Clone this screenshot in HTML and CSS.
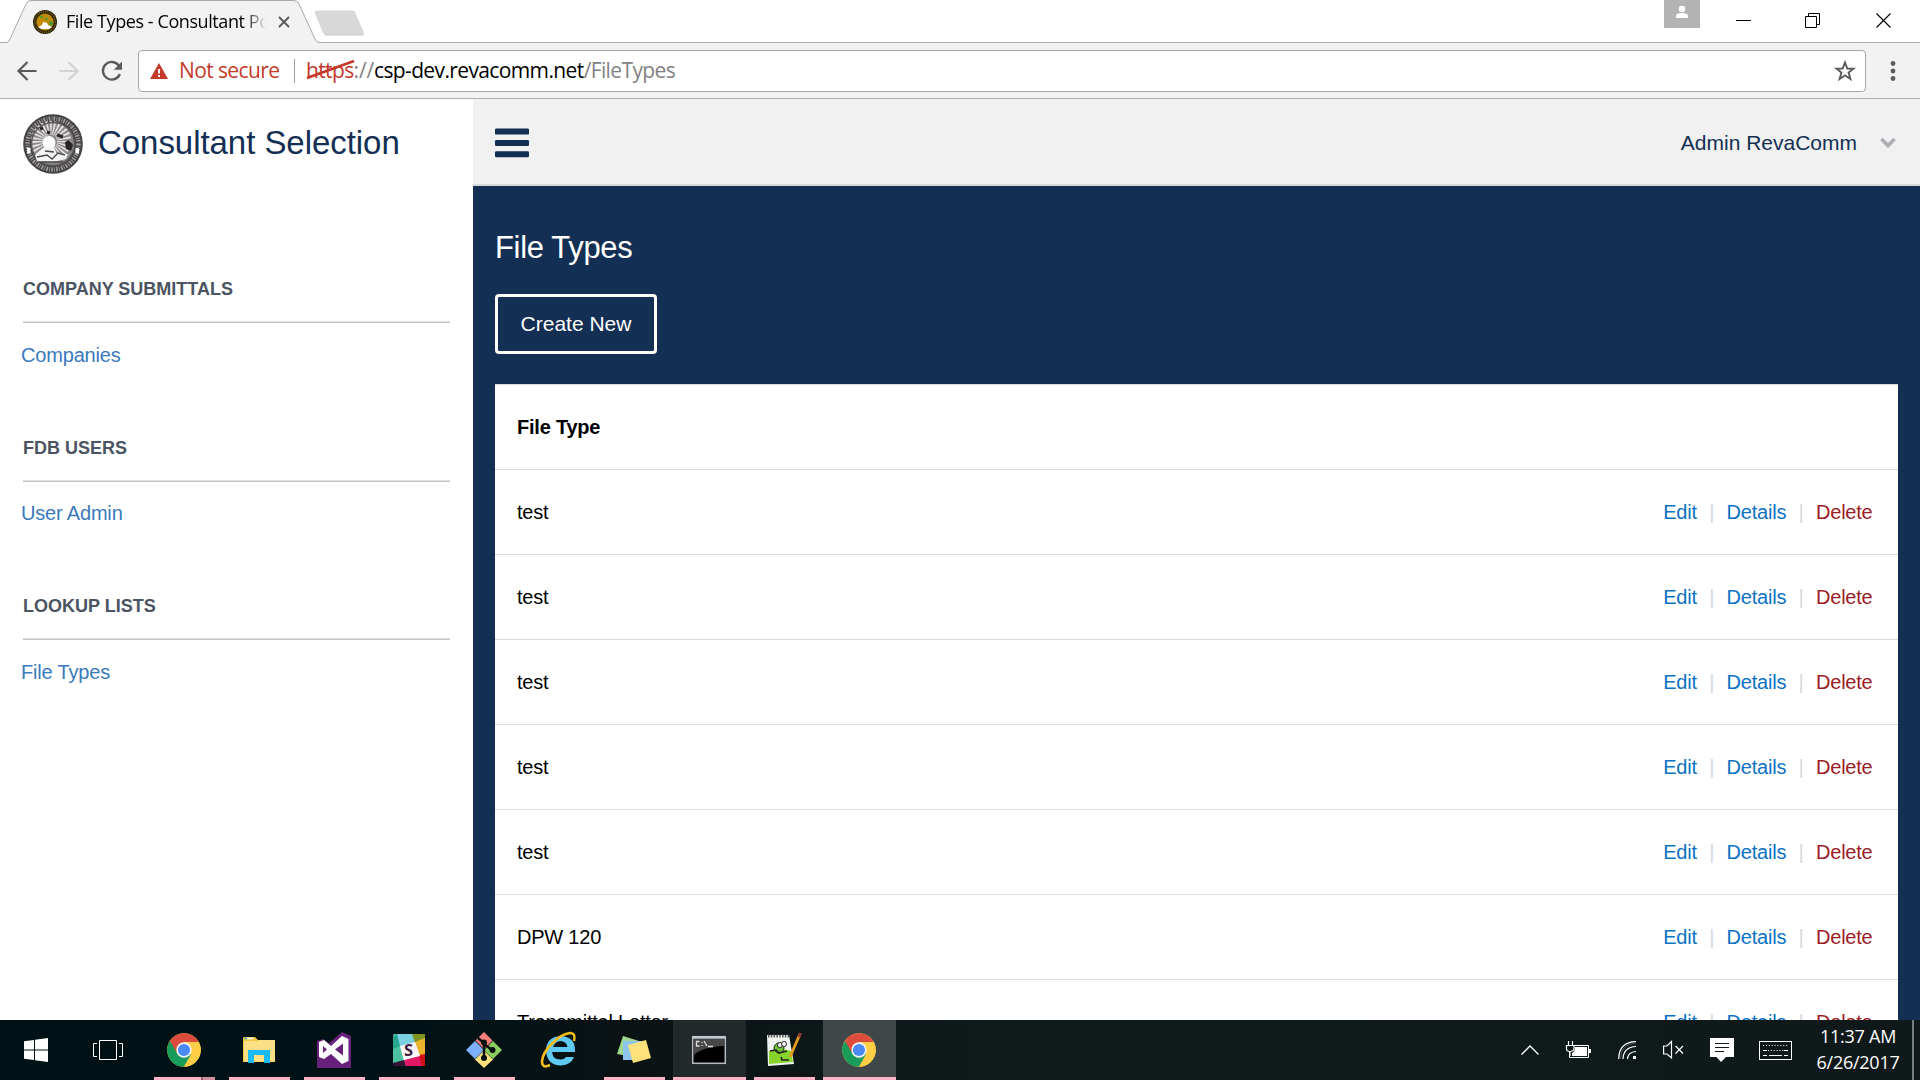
FILE: index.html
```html
<!DOCTYPE html>
<html lang="en">
<head>
<meta charset="utf-8">
<title>File Types - Consultant Portal</title>
<link rel="stylesheet" href="styles.css">
</head>
<body>
<svg class="defs" width="0" height="0" aria-hidden="true">
  <symbol id="chrome" viewBox="0 0 34 34">
    <circle cx="17" cy="17" r="16.8" fill="#ffce44"/>
    <path d="M17 17 L2.6 8.4 A16.8 16.8 0 0 0 17 33.8 L24.2 21.2Z" fill="#179c5a"/>
    <path d="M17 9 H31.8 A16.8 16.8 0 0 0 2.9 7.9 L10 20 L17 17Z" fill="#dc4b3e"/>
    <path d="M17 33.8 L24.2 21.2 L26 12 L31.8 9 A16.8 16.8 0 0 1 17 33.8Z" fill="#ffce44"/>
    <circle cx="17" cy="17" r="7.7" fill="#f4f4f4"/>
    <circle cx="17" cy="17" r="6.1" fill="#4a8af4"/>
  </symbol>
</svg>

<div class="tabstrip">
  <div class="tab">
    <svg class="tab-shape" width="320" height="43" viewBox="0 0 320 43"><path d="M0 42.5H6Q8.500 42.500 9.500 40L26 4Q28 .5 31 .5H294Q297 .5 299 4L315 39Q316.500 42.500 319 42.500H320V43H0Z" fill="#f2f2f2"/><path d="M0 42.500H6Q8.500 42.500 9.500 40L26 4Q28 .5 31 .5H294Q297 .5 299 4L315 39Q316.500 42.500 319 42.500H320" fill="none" stroke="#a9a9a9"/></svg>
    <svg class="favicon" width="24" height="24" viewBox="0 0 24 24"><circle cx="12" cy="12" r="12" fill="#2b2308"/><circle cx="12" cy="12" r="10.300" fill="none" stroke="#7b6410" stroke-width="1.500" stroke-dasharray="1 1"/><circle cx="12" cy="12" r="8.600" fill="#c08c06"/><path d="M7 6.500l3 1M12 8.500l3 1" stroke="#3f9a3a" stroke-width="1.500"/><path d="M16 12l2.500-1 1.500 2-1.500 3-2-1z" fill="#3f9a3a"/><path d="M5 17l4-2 1-3 4 1 1 2 4 2-3 2H9z" fill="#fff"/></svg>
    <span class="tab-title">File Types - Consultant Portal</span>
    <svg class="tab-close" width="12" height="12" viewBox="0 0 12 12"><path d="M1 1l10 10M11 1L1 11" stroke="#5a5a5a" stroke-width="1.900"/></svg>
  </div>
  <svg class="newtab" width="52" height="26" viewBox="0 0 52 26"><path d="M3 .5H38Q40 .5 41 2L50 23Q50.500 25 48.500 25H12Q10 25 9 23L.8 3Q.5 .5 3 .5Z" fill="#d8d8d8"/><path d="M11 25H49" stroke="#c6c6c6"/></svg>
  <div class="win-controls">
    <svg width="36" height="28" viewBox="0 0 36 28"><path d="M0 0H36V28H0z" fill="#b3b3b3"/><circle cx="18" cy="9" r="3.200" fill="#fff"/><path d="M12 18V15.500Q12 13 18 13T24 15.500V18Z" fill="#fff"/></svg>
    <svg class="min" width="16" height="28" viewBox="0 0 16 28"><path d="M0 20.500H15" stroke="#000"/></svg>
    <svg class="max" width="16" height="29" viewBox="0 0 16 29"><path d="M.5 16.500H11.500V27.500H.5zM3.500 16V13.500H14.500V24.500H12" fill="none" stroke="#000"/></svg>
    <svg class="close" width="16" height="29" viewBox="0 0 16 29"><path d="M.5 13.500l14 14M14.500 13.500l-14 14" stroke="#000" stroke-width="1.100"/></svg>
  </div>
</div>

<div class="toolbar">
  <svg class="back" width="20" height="20" viewBox="0 0 20 20"><path d="M19.500 10H2M10.500 1L1.500 10L10.500 19" fill="none" stroke="#5a5a5a" stroke-width="2.200"/></svg>
  <svg class="fwd" width="20" height="20" viewBox="0 0 20 20"><path d="M.5 10H18M9.500 1L18.500 10L9.500 19" fill="none" stroke="#d3d3d3" stroke-width="2.200"/></svg>
  <svg class="reload" width="22" height="20" viewBox="0 0 22 20"><path d="M18 4.800A8.800 8.800 0 1 0 18.900 13" fill="none" stroke="#5a5a5a" stroke-width="2.300"/><path d="M21 .6V8.700H12.800Z" fill="#5a5a5a"/></svg>
  <div class="omnibox">
    <svg class="warn" width="18" height="16" viewBox="0 0 18 16"><path d="M9 0L18 16H0Z" fill="#c5392a"/><path d="M9 6V10.500M9 12V14" stroke="#fff" stroke-width="1.900"/></svg>
    <span class="insecure">Not secure</span>
    <span class="divider"></span>
    <span class="url"><span class="scheme">https<svg class="strike" width="50" height="22" viewBox="0 0 50 22"><path d="M1 19L48 2" stroke="#c5392a" stroke-width="2.800"/></svg></span><span class="sep">://</span><span class="host">csp-dev.revacomm.net</span><span class="path">/FileTypes</span></span>
    <svg class="star" width="22" height="22" viewBox="0 0 22 22"><path d="M11 2.500L13.300 8.500L19.500 8.700L14.600 12.600L16.400 19L11 15.300L5.600 19L7.400 12.600L2.500 8.700L8.700 8.500Z" fill="none" stroke="#5a5a5a" stroke-width="1.900"/></svg>
  </div>
  <svg class="menu" width="6" height="22" viewBox="0 0 6 22"><g fill="#5a5a5a"><circle cx="3" cy="3.500" r="2.400"/><circle cx="3" cy="11" r="2.400"/><circle cx="3" cy="18.500" r="2.400"/></g></svg>
</div>

<div class="app">
  <aside class="sidebar">
    <div class="brand">
      <svg class="seal" width="60" height="60" viewBox="0 0 60 60">
        <circle cx="30" cy="30" r="29.800" fill="#454243"/>
        <circle cx="30" cy="30" r="25.500" fill="none" stroke="#a19e9e" stroke-width="4.500" stroke-dasharray="1.600 1.400 .8 1.200"/>
        <circle cx="30" cy="30" r="21.500" fill="#8a8788"/>
        <circle cx="28" cy="27" r="13" fill="none" stroke="#e2e0e1" stroke-width="14" stroke-dasharray="1.500 1.500"/>
        <circle cx="30" cy="30" r="21.500" fill="none" stroke="#5c595a" stroke-width="1.500"/>
        <circle cx="26" cy="28.500" r="6.500" fill="#fff"/>
        <path d="M17 15l3-1M24 18l3 1M34 21l6 2" stroke="#262425" stroke-width="3"/>
        <path d="M42 28l4-2 4 5-2 6-5-2z" fill="#262425"/>
        <path d="M12 41l9-7 10-2 2 7 12 1-2 5-13 3-16-1z" fill="#f5f5f5"/>
        <path d="M14 43l10-2 5 4 6-6 7 2M22 37l9 1M18 48h22" fill="none" stroke="#4b4849" stroke-width="1.400"/>
        <path d="M4 34h3.500v5.500H4zM52.500 34H56v5.500h-3.500z" fill="#fff"/>
      </svg>
      <span class="brand-name">Consultant Selection</span>
    </div>
    <nav class="nav">
      <section class="nav-section"><h2 class="nav-heading">COMPANY SUBMITTALS</h2><a class="nav-link">Companies</a></section>
      <section class="nav-section"><h2 class="nav-heading">FDB USERS</h2><a class="nav-link">User Admin</a></section>
      <section class="nav-section"><h2 class="nav-heading">LOOKUP LISTS</h2><a class="nav-link">File Types</a></section>
    </nav>
  </aside>
  <div class="main">
    <header class="topbar">
      <svg class="burger" width="34" height="30" viewBox="0 0 34 30"><g fill="#132f53"><rect y=".6" width="34" height="6" rx="1.200"/><rect y="12" width="34" height="6" rx="1.200"/><rect y="23.300" width="34" height="6" rx="1.200"/></g></svg>
      <span class="user">Admin RevaComm</span>
      <svg class="caret" width="16" height="12" viewBox="0 0 16 12"><path d="M1.500 2L8 8.500L14.500 2" fill="none" stroke="#adb1b6" stroke-width="3.800"/></svg>
    </header>
    <main class="content">
      <h1 class="title">File Types</h1>
      <a class="create">Create New</a>
      <div class="table">
        <div class="row head"><span>File Type</span></div>
        <div class="row"><span>test</span><span class="actions"><a>Edit</a><i>|</i><a>Details</a><i>|</i><a class="delete">Delete</a></span></div>
        <div class="row"><span>test</span><span class="actions"><a>Edit</a><i>|</i><a>Details</a><i>|</i><a class="delete">Delete</a></span></div>
        <div class="row"><span>test</span><span class="actions"><a>Edit</a><i>|</i><a>Details</a><i>|</i><a class="delete">Delete</a></span></div>
        <div class="row"><span>test</span><span class="actions"><a>Edit</a><i>|</i><a>Details</a><i>|</i><a class="delete">Delete</a></span></div>
        <div class="row"><span>test</span><span class="actions"><a>Edit</a><i>|</i><a>Details</a><i>|</i><a class="delete">Delete</a></span></div>
        <div class="row"><span>DPW 120</span><span class="actions"><a>Edit</a><i>|</i><a>Details</a><i>|</i><a class="delete">Delete</a></span></div>
        <div class="row"><span>Transmittal Letter</span><span class="actions"><a>Edit</a><i>|</i><a>Details</a><i>|</i><a class="delete">Delete</a></span></div>
      </div>
    </main>
  </div>
</div>

<footer class="taskbar">
  <div class="sys"><svg width="24" height="24" viewBox="0 0 24 24"><path d="M0 3.300L10 1.900V11.400H0zM11 1.700L24 0V11.400H11zM0 12.500H10V22L0 20.700zM11 12.500H24V24L11 22.200z" fill="#fff"/></svg></div>
  <div class="sys"><svg width="30" height="20" viewBox="0 0 30 20"><path d="M6.500 .5H23.500V19.500H6.500zM4 3.500H.5V16.500H4M26 3.500H29.500V16.500H26" fill="none" stroke="#fff"/></svg></div>
  <div class="tasks">
    <div class="task open stacked"><svg width="34" height="34"><use href="#chrome"/></svg></div>
    <div class="task open"><svg width="32" height="28" viewBox="0 0 32 28"><path d="M0 2Q0 1 1 1H12L15 4H31Q32 4 32 5V26H0z" fill="#f5c842"/><path d="M1 5H14L16 4H32V25.500H1z" fill="#fbdf87"/><path d="M3 2.500H10" stroke="#fff" stroke-width="1.500"/><path d="M1.500 2.500H4" stroke="#2ba2a2" stroke-width="1.500"/><path d="M5 14H27V27H21V19H11V27H5z" fill="#19b9f2"/></svg></div>
    <div class="task open"><svg width="34" height="36" viewBox="0 0 34 36"><path d="M0 9L6 7L12 11L25 0L34 4V36H0z" fill="#68217a"/><path d="M2 10L7 8L14 14L25 4L31.500 7V29L25 32L14 22L7 27L2 25zM6 14V21L10 17.500zM18 17.500L26 23.500V11.500z" fill="#fff" fill-rule="evenodd"/></svg></div>
    <div class="task open"><svg width="32" height="32" viewBox="0 0 32 32"><rect width="32" height="32" rx="2" fill="#f8f5f5"/><path d="M2 0H4L12 31H11L0 31V2z" fill="#4bc3a0"/><path d="M3 0H20L23 9L7 13z" fill="#7bd1e2"/><path d="M0 2L4 0L7 12L0 15z" fill="#26a68f"/><path d="M19 0H32V5L22 9z" fill="#7d9623"/><path d="M22 8L32 4V22L27 23z" fill="#ecb42e"/><path d="M11 26L27 21L30 32H13z" fill="#e01765"/><path d="M26 21L32 20V32H29z" fill="#d10f16"/><path d="M0 29L11 26L13 32H0z" fill="#361238"/><path d="M7 12L22 8L27 22L11 26z" fill="#fbf6f8"/><text x="11" y="22" class="slack-s">S</text></svg></div>
    <div class="task open"><svg width="36" height="36" viewBox="0 0 36 36"><path d="M18 0L26.500 8.500L18 17L9.500 8.500z" fill="#ff7d7d"/><path d="M27 9L36 18L27 27L18 18z" fill="#89cf60"/><path d="M9 9L18 18L9 27L0 18z" fill="#7eafff"/><path d="M18 18.500L27 27.500L18 36L9 27.500z" fill="#ffe27d"/><path d="M12 6L18 11V26M18 12L26 18" stroke="#07110f" stroke-width="2.500" fill="none"/><circle cx="18" cy="10.500" r="3" fill="#07110f"/><circle cx="26.500" cy="18" r="3" fill="#07110f"/><circle cx="18" cy="26" r="3" fill="#07110f"/></svg></div>
    <div class="task"><svg width="36" height="36" viewBox="0 0 36 36"><path d="M11 20H34Q35 5 20 4Q5 5 5 19Q6 33 20 33.500Q30 33 33 25H25Q23 28 19 27.500Q12 27 11.500 22zM12 15Q14 9 20 9Q26 10 26.500 15z" fill="#5fcbf5" fill-rule="evenodd"/><path d="M9 33Q1 37 1 29C2 18 18 2 29 1Q35 1 33 9" fill="none" stroke="#f3bd1c" stroke-width="2.600"/></svg></div>
    <div class="task open"><svg width="34" height="28" viewBox="0 0 34 28"><path d="M6 0L22 5L17 21L0 18z" fill="#9fd78e"/><path d="M6 5H24V24H6z" fill="#8fc4ef"/><path d="M11 9L29 4L34 22L16 27z" fill="#fde17a"/></svg></div>
    <div class="task open active"><svg width="34" height="28" viewBox="0 0 34 28"><rect x=".7" y=".7" width="32.600" height="26.600" fill="#000" stroke="#b4bcc4" stroke-width="1.500"/><path d="M1 1.500H33" stroke="#c5ced8" stroke-width="2.500"/><path d="M2 3H32V10Q10 11 2 19z" fill="#484848"/><path d="M7.500 5.500H4.500V10H7.500M10 6v1M10 9v1M12 5l3 5M16 10.500H21" fill="none" stroke="#ddd" stroke-width="1.300"/></svg></div>
    <div class="task open"><svg width="34" height="34" viewBox="0 0 34 34"><path d="M0 2H22L27 31L1 33z" fill="#eef3f0"/><path d="M2 18Q12 14 24 18L26 29L2 31z" fill="#87d42c"/><path d="M1 3H22" stroke="#555" stroke-width="3" stroke-dasharray="1.500 1.300"/><circle cx="12" cy="15" r="5" fill="#6dbd37" stroke="#243b18"/><circle cx="13" cy="12" r="2.500" fill="#fff" stroke="#222"/><circle cx="17" cy="11" r="2.500" fill="#fff" stroke="#222"/><path d="M3 18L9 17L12 20L20 18M14 24L15 27H22" fill="none" stroke="#222" stroke-width="1.600"/><path d="M33 1L23 24" stroke="#e79a1b" stroke-width="2.800"/><path d="M33.500 0L32 4" stroke="#923838" stroke-width="3"/></svg></div>
    <div class="task open active current"><svg width="34" height="34"><use href="#chrome"/></svg></div>
  </div>
  <div class="tray">
    <svg width="18" height="12" viewBox="0 0 18 12"><path d="M.5 10.500L9 2L17.500 10.500" fill="none" stroke="#fff" stroke-width="1.300"/></svg>
    <svg class="battery" width="25" height="18" viewBox="0 0 25 18"><path d="M8 4.500H22.500V16.500H3.500V11" fill="none" stroke="#fff"/><path d="M9 6H21V15H6V12Q9 11 9 6zM23 8h2v4h-2z" fill="#fff"/><path d="M2.500 0V4M6.500 0V4M.5 4.500H8V7Q8 10.500 4 10.500T.5 7zM4 10v5" fill="none" stroke="#fff" stroke-width="1.200"/></svg>
    <svg class="wifi" width="19" height="19" viewBox="0 0 19 19"><path d="M.7 18Q1 1 18 .7M5 18Q5.500 6 18 5.500M9.500 18Q10 11 18 10.500" fill="none" stroke="#fff" stroke-width="1.200"/><path d="M2.500 18Q2.500 3 18 2" fill="none" stroke="#777" stroke-width=".6"/><path d="M15 15h3v3h-3z" fill="#fff"/></svg>
    <svg class="volume" width="21" height="20" viewBox="0 0 21 20"><path d="M.6 6H4L8.500 1.500V18L4 14H.6zM12.500 6l7.500 7.500M20 6l-7.500 7.500" fill="none" stroke="#fff" stroke-width="1.200"/></svg>
    <svg class="action" width="24" height="24" viewBox="0 0 24 24"><path d="M0 0H24V19H16L11 24L6.500 19H0z" fill="#fff"/><path d="M5 5.500H19M5 9.500H19M5 13.500H14" stroke="#111b1c"/></svg>
    <svg class="keyboard" width="33" height="19" viewBox="0 0 33 19"><rect x=".5" y=".5" width="32" height="18" fill="none" stroke="#fff"/><path d="M4 4.500H30M6 9.500H27" stroke="#fff" stroke-dasharray="1 1.900"/><path d="M4 9.500H8M25 9.500H29M4 14.500H8M10 14.500H23M25 14.500H29" stroke="#fff"/></svg>
    <div class="clock"><span>11:37 AM</span><span>6/26/2017</span></div>
    <div class="desktop"></div>
  </div>
</footer>
</body>
</html>
```

FILE: styles.css
```css
* { box-sizing: border-box; }
body { margin: 0; width: 1920px; height: 1080px; overflow: hidden; display: flex; flex-direction: column; font-family: "Liberation Sans", Arial, sans-serif; font-size: 20px; background: #fff; }
svg { display: block; flex: none; overflow: visible; }
.defs { position: absolute; }

/* Browser window */
.tabstrip { height: 43px; flex: none; display: flex; align-items: flex-start; border-bottom: 1px solid #a9a9a9; font-family: "Open Sans", sans-serif; }
.tab { position: relative; width: 314px; height: 43px; flex: none; display: flex; align-items: center; padding-left: 33px; }
.tab-shape { position: absolute; left: 0; top: 0; }
.favicon { position: relative; margin-right: 9px; }
.tab-title { position: relative; width: 200px; padding-bottom: 2px; overflow: hidden; white-space: nowrap; font-size: 18px; letter-spacing: -.42px; -webkit-mask-image: linear-gradient(90deg, #000 178px, transparent 200px); mask-image: linear-gradient(90deg, #000 178px, transparent 200px); }
.tab-close { position: relative; margin-left: 12px; }
.newtab { margin-top: 10px; }
.win-controls { margin-left: auto; display: flex; padding-right: 28px; }
.min { margin-left: 36px; }
.max { margin-left: 53px; }
.close { margin-left: 55px; }
.toolbar { height: 56px; flex: none; display: flex; align-items: center; padding: 0 24px 0 17px; background: #f2f2f2; border-bottom: 1px solid #b0b0b0; font-family: "Open Sans", sans-serif; }
.fwd { margin-left: 22px; }
.reload { margin-left: 22px; }
.omnibox { flex: 1; height: 42px; margin: 0 24px 0 15px; display: flex; align-items: center; padding: 0 9px 0 11px; background: #fff; border: 1px solid #a6a6a6; border-radius: 4px; font-size: 21px; letter-spacing: -.62px; white-space: nowrap; }
.insecure, .url { padding-bottom: 1px; }
.insecure { margin-left: 11px; color: #c5392a; width: 104px; }
.divider { width: 1px; height: 24px; margin: 0 11px; background: #a0a0a0; }
.scheme { position: relative; color: #c5392a; }
.strike { position: absolute; left: 0; top: 3px; }
.sep, .path { color: #828282; }
.sep { letter-spacing: -.2px; }
.host { color: #000; }
.star { margin-left: auto; }

/* Application */
.app { flex: 1; min-height: 0; display: flex; overflow: hidden; }
.sidebar { width: 473px; flex: none; background: #fff; }
.brand { height: 180px; display: flex; align-items: flex-start; padding: 15px 0 0 23px; }
.brand-name { margin-left: 15px; line-height: 58px; font-size: 33px; letter-spacing: -.05px; color: #132f53; }
.nav-section { height: 158.5px; padding: 0 23px 0 21px; }
.nav-heading { margin: 0 0 19.6px 2px; width: 427px; height: 44px; line-height: 20px; font-size: 18px; border-bottom: 1px solid #c3c5c7; box-shadow: inset 0 -1px 0 #dfe0e1; color: #4b5462; }
.nav-link { display: block; line-height: 24px; letter-spacing: -.18px; color: #3a7abd; }
.main { flex: 1; min-width: 0; display: flex; flex-direction: column; background: #132f53; }
.topbar { height: 87px; flex: none; display: flex; align-items: center; padding: 2px 24px 0 22px; background: #f1f1f1; border-bottom: 2px solid #d9dadc; }
.user { margin-left: auto; font-size: 21px; color: #132f53; }
.caret { margin-left: 23px; }
.content { padding: 44px 22px 0; display: flex; flex-direction: column; align-items: flex-start; }
.title { margin: 0 0 28px; line-height: 36px; font-size: 31px; font-weight: 400; letter-spacing: -.33px; color: #fff; }
.create { width: 162px; height: 60px; flex: none; border: 3px solid #fff; border-radius: 4px; display: flex; align-items: center; justify-content: center; font-size: 21px; color: #fff; }
.table { width: 1403px; margin-top: 30px; background: #fff; }
.row { height: 85px; display: flex; align-items: center; justify-content: space-between; padding: 0 25.5px 0 22px; border-top: 1px solid #d9dadb; letter-spacing: -.22px; color: #000; }
.head { font-weight: 700; }
.actions { display: flex; color: #0b72c4; }
.actions i { width: 29.8px; text-align: center; font-style: normal; color: #d6d8dc; }
.actions .delete { color: #9c1c26; }

/* Taskbar */
.taskbar { height: 60px; flex: none; display: flex; background: linear-gradient(90deg, #001216 0, #001216 400px, #0a1214 620px, #0f1a1b 1000px, #0f191a); }
.sys { width: 72px; display: flex; align-items: center; justify-content: center; }
.tasks { display: flex; gap: 2px; margin-left: 4px; }
.task { position: relative; width: 73px; padding-right: 1px; display: flex; align-items: center; justify-content: center; }
.task.open::after { content: ""; position: absolute; left: 6px; right: 6px; bottom: 0; height: 3px; background: #ffb3c6; }
.task.stacked::after { background: linear-gradient(90deg, #ffb3c6 47px, #94626f 47px, #94626f 49px, #d18fa0 49px); }
.task.active { background: #23292b; }
.task.active::after { left: 0; right: 0; }
.task.current { background: #404748; }
.slack-s { font: 700 16.5px "Open Sans", sans-serif; fill: #3f1d42; }
.tray { margin-left: auto; display: flex; align-items: center; }
.battery { margin-left: 27px; }
.wifi { margin-left: 27px; }
.volume { margin-left: 26px; }
.action { margin-left: 26px; }
.keyboard { margin-left: 25px; }
.clock { width: 120px; display: flex; flex-direction: column; align-items: center; padding: 0 0 2px 12px; font-family: "Open Sans", sans-serif; font-size: 18px; line-height: 26px; letter-spacing: -.25px; color: #fff; }
.desktop { width: 8px; height: 60px; border-left: 2px solid #777d7e; }
```
